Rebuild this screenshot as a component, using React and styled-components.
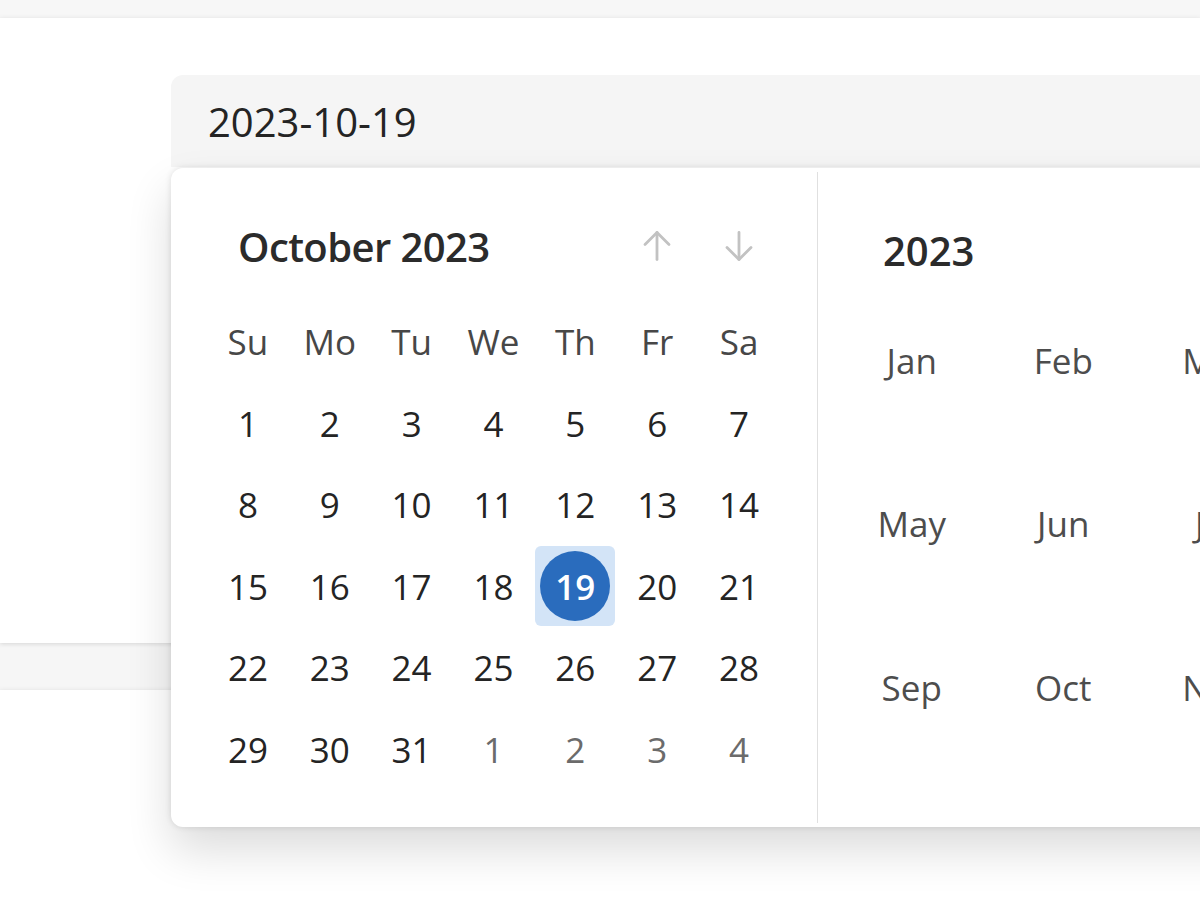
import React from "react";
import styled, { createGlobalStyle } from "styled-components";

const Global = createGlobalStyle`
  html, body {
    margin: 0;
    padding: 0;
    background: #ffffff;
    overflow: hidden;
  }
  body {
    font-family: "Segoe UI", "Open Sans", "Noto Sans", sans-serif;
    color: #242424;
  }
`;

const Page = styled.div`
  width: 1200px;
  height: 900px;
  display: flex;
  flex-direction: column;
  background: #f6f6f6;
`;

const TopStrip = styled.div`
  height: 18px;
  flex: none;
  background: #f7f7f7;
`;

const Card = styled.section`
  position: relative;
  z-index: ${(p) => p.$z || 0};
  flex: ${(p) => (p.$grow ? "1" : "none")};
  height: ${(p) => (p.$height ? `${p.$height}px` : "auto")};
  background: #ffffff;
  box-shadow: 0 0 5px rgba(0, 0, 0, 0.08), 0 2px 4px rgba(0, 0, 0, 0.06);
  padding-top: ${(p) => p.$padTop || 0}px;
  box-sizing: border-box;
`;

const Band = styled.div`
  height: 47px;
  flex: none;
`;

const Field = styled.div`
  position: relative;
  margin-left: 171px;
  width: 1100px;
`;

const Input = styled.div`
  height: 92px;
  box-sizing: border-box;
  display: flex;
  align-items: center;
  padding-left: 37px;
  background: #f5f5f5;
  border-radius: 12px 12px 0 0;
  font-size: 40px;
  color: #242424;
`;

const Popover = styled.div`
  position: absolute;
  top: 93px;
  left: 0;
  width: 1100px;
  height: 659px;
  display: flex;
  background: #ffffff;
  border-radius: 12px;
  box-shadow: 0 0 6px rgba(0, 0, 0, 0.12), 0 23px 46px rgba(0, 0, 0, 0.14);
`;

const DayPane = styled.div`
  width: 646px;
  flex: none;
  box-sizing: border-box;
  padding: 37px 37px 36px 36px;
  display: flex;
  flex-direction: column;
`;

const Header = styled.div`
  display: flex;
  align-items: center;
  height: ${(p) => p.$height || 82}px;
  margin-bottom: ${(p) => p.$gap || 14}px;
  padding-left: ${(p) => p.$indent || 0}px;
`;

const Title = styled.div`
  flex: 1;
  font-size: 40px;
  font-weight: 600;
  color: #2b2b2b;
  letter-spacing: ${(p) => p.$tight ? "-0.6px" : "0"};
  padding-left: ${(p) => p.$indent || 0}px;
`;

const NavButton = styled.div`
  width: 82px;
  height: 82px;
  display: flex;
  align-items: center;
  justify-content: center;
  color: #c2c2c2;
`;

const DayGrid = styled.div`
  display: grid;
  grid-template-columns: repeat(7, 1fr);
  grid-auto-rows: 81.5px;
`;

const Cell = styled.div`
  display: flex;
  align-items: center;
  justify-content: center;
  font-size: 35px;
  color: ${(p) => (p.$weekday ? "#474747" : p.$outside ? "#6b6b6b" : "#242424")};
`;

const SelectedSquare = styled.div`
  width: 80px;
  height: 80px;
  border-radius: 6px;
  background: #d3e4f7;
  display: flex;
  align-items: center;
  justify-content: center;
`;

const SelectedCircle = styled.div`
  width: 70px;
  height: 70px;
  border-radius: 50%;
  background: #2a6cbd;
  color: #ffffff;
  font-weight: 600;
  display: flex;
  align-items: center;
  justify-content: center;
`;

const Divider = styled.div`
  width: 1px;
  flex: none;
  margin: 4px 0;
  background: #e0e0e0;
`;

const MonthPane = styled.div`
  flex: 1;
  padding: 38px 0 0 18px;
  display: flex;
  flex-direction: column;
`;

const MonthGrid = styled.div`
  display: grid;
  grid-template-columns: repeat(4, 151.5px);
  grid-auto-rows: 116px;
  row-gap: 47.5px;
`;

const MonthCell = styled.div`
  display: flex;
  align-items: center;
  justify-content: center;
  font-size: 35px;
  color: #4d4d4d;
`;

const Arrow = ({ down }) => (
  <svg
    width="30"
    height="32"
    viewBox="0 0 30 32"
    fill="none"
    stroke="currentColor"
    strokeWidth="2.8"
    strokeLinecap="round"
    strokeLinejoin="round"
    style={down ? { transform: "rotate(180deg)" } : undefined}
  >
    <path d="M15 2.5 V29.5" />
    <path d="M3 14.5 L15 2.5 L27 14.5" />
  </svg>
);

const weekdays = ["Su", "Mo", "Tu", "We", "Th", "Fr", "Sa"];
const days = [];
for (let d = 1; d <= 31; d++) days.push({ n: d });
for (let d = 1; d <= 4; d++) days.push({ n: d, outside: true });

const months = ["Jan", "Feb", "Mar", "Apr", "May", "Jun", "Jul", "Aug", "Sep", "Oct", "Nov", "Dec"];

export default function App() {
  return (
    <>
      <Global />
      <Page>
        <TopStrip />
        <Card $z={1} $height={625} $padTop={57}>
          <Field>
            <Input>2023-10-19</Input>
            <Popover>
              <DayPane>
                <Header>
                  <Title $indent={31} $tight>October 2023</Title>
                  <NavButton>
                    <Arrow />
                  </NavButton>
                  <NavButton>
                    <Arrow down />
                  </NavButton>
                </Header>
                <DayGrid>
                  {weekdays.map((w) => (
                    <Cell key={w} $weekday>
                      {w}
                    </Cell>
                  ))}
                  {days.map((d, i) => (
                    <Cell key={i} $outside={d.outside}>
                      {!d.outside && d.n === 19 ? (
                        <SelectedSquare>
                          <SelectedCircle>19</SelectedCircle>
                        </SelectedSquare>
                      ) : (
                        d.n
                      )}
                    </Cell>
                  ))}
                </DayGrid>
              </DayPane>
              <Divider />
              <MonthPane>
                <Header $height={88} $gap={8} $indent={47}>
                  <Title>2023</Title>
                </Header>
                <MonthGrid>
                  {months.map((m) => (
                    <MonthCell key={m}>{m}</MonthCell>
                  ))}
                </MonthGrid>
              </MonthPane>
            </Popover>
          </Field>
        </Card>
        <Band />
        <Card $grow />
      </Page>
    </>
  );
}
